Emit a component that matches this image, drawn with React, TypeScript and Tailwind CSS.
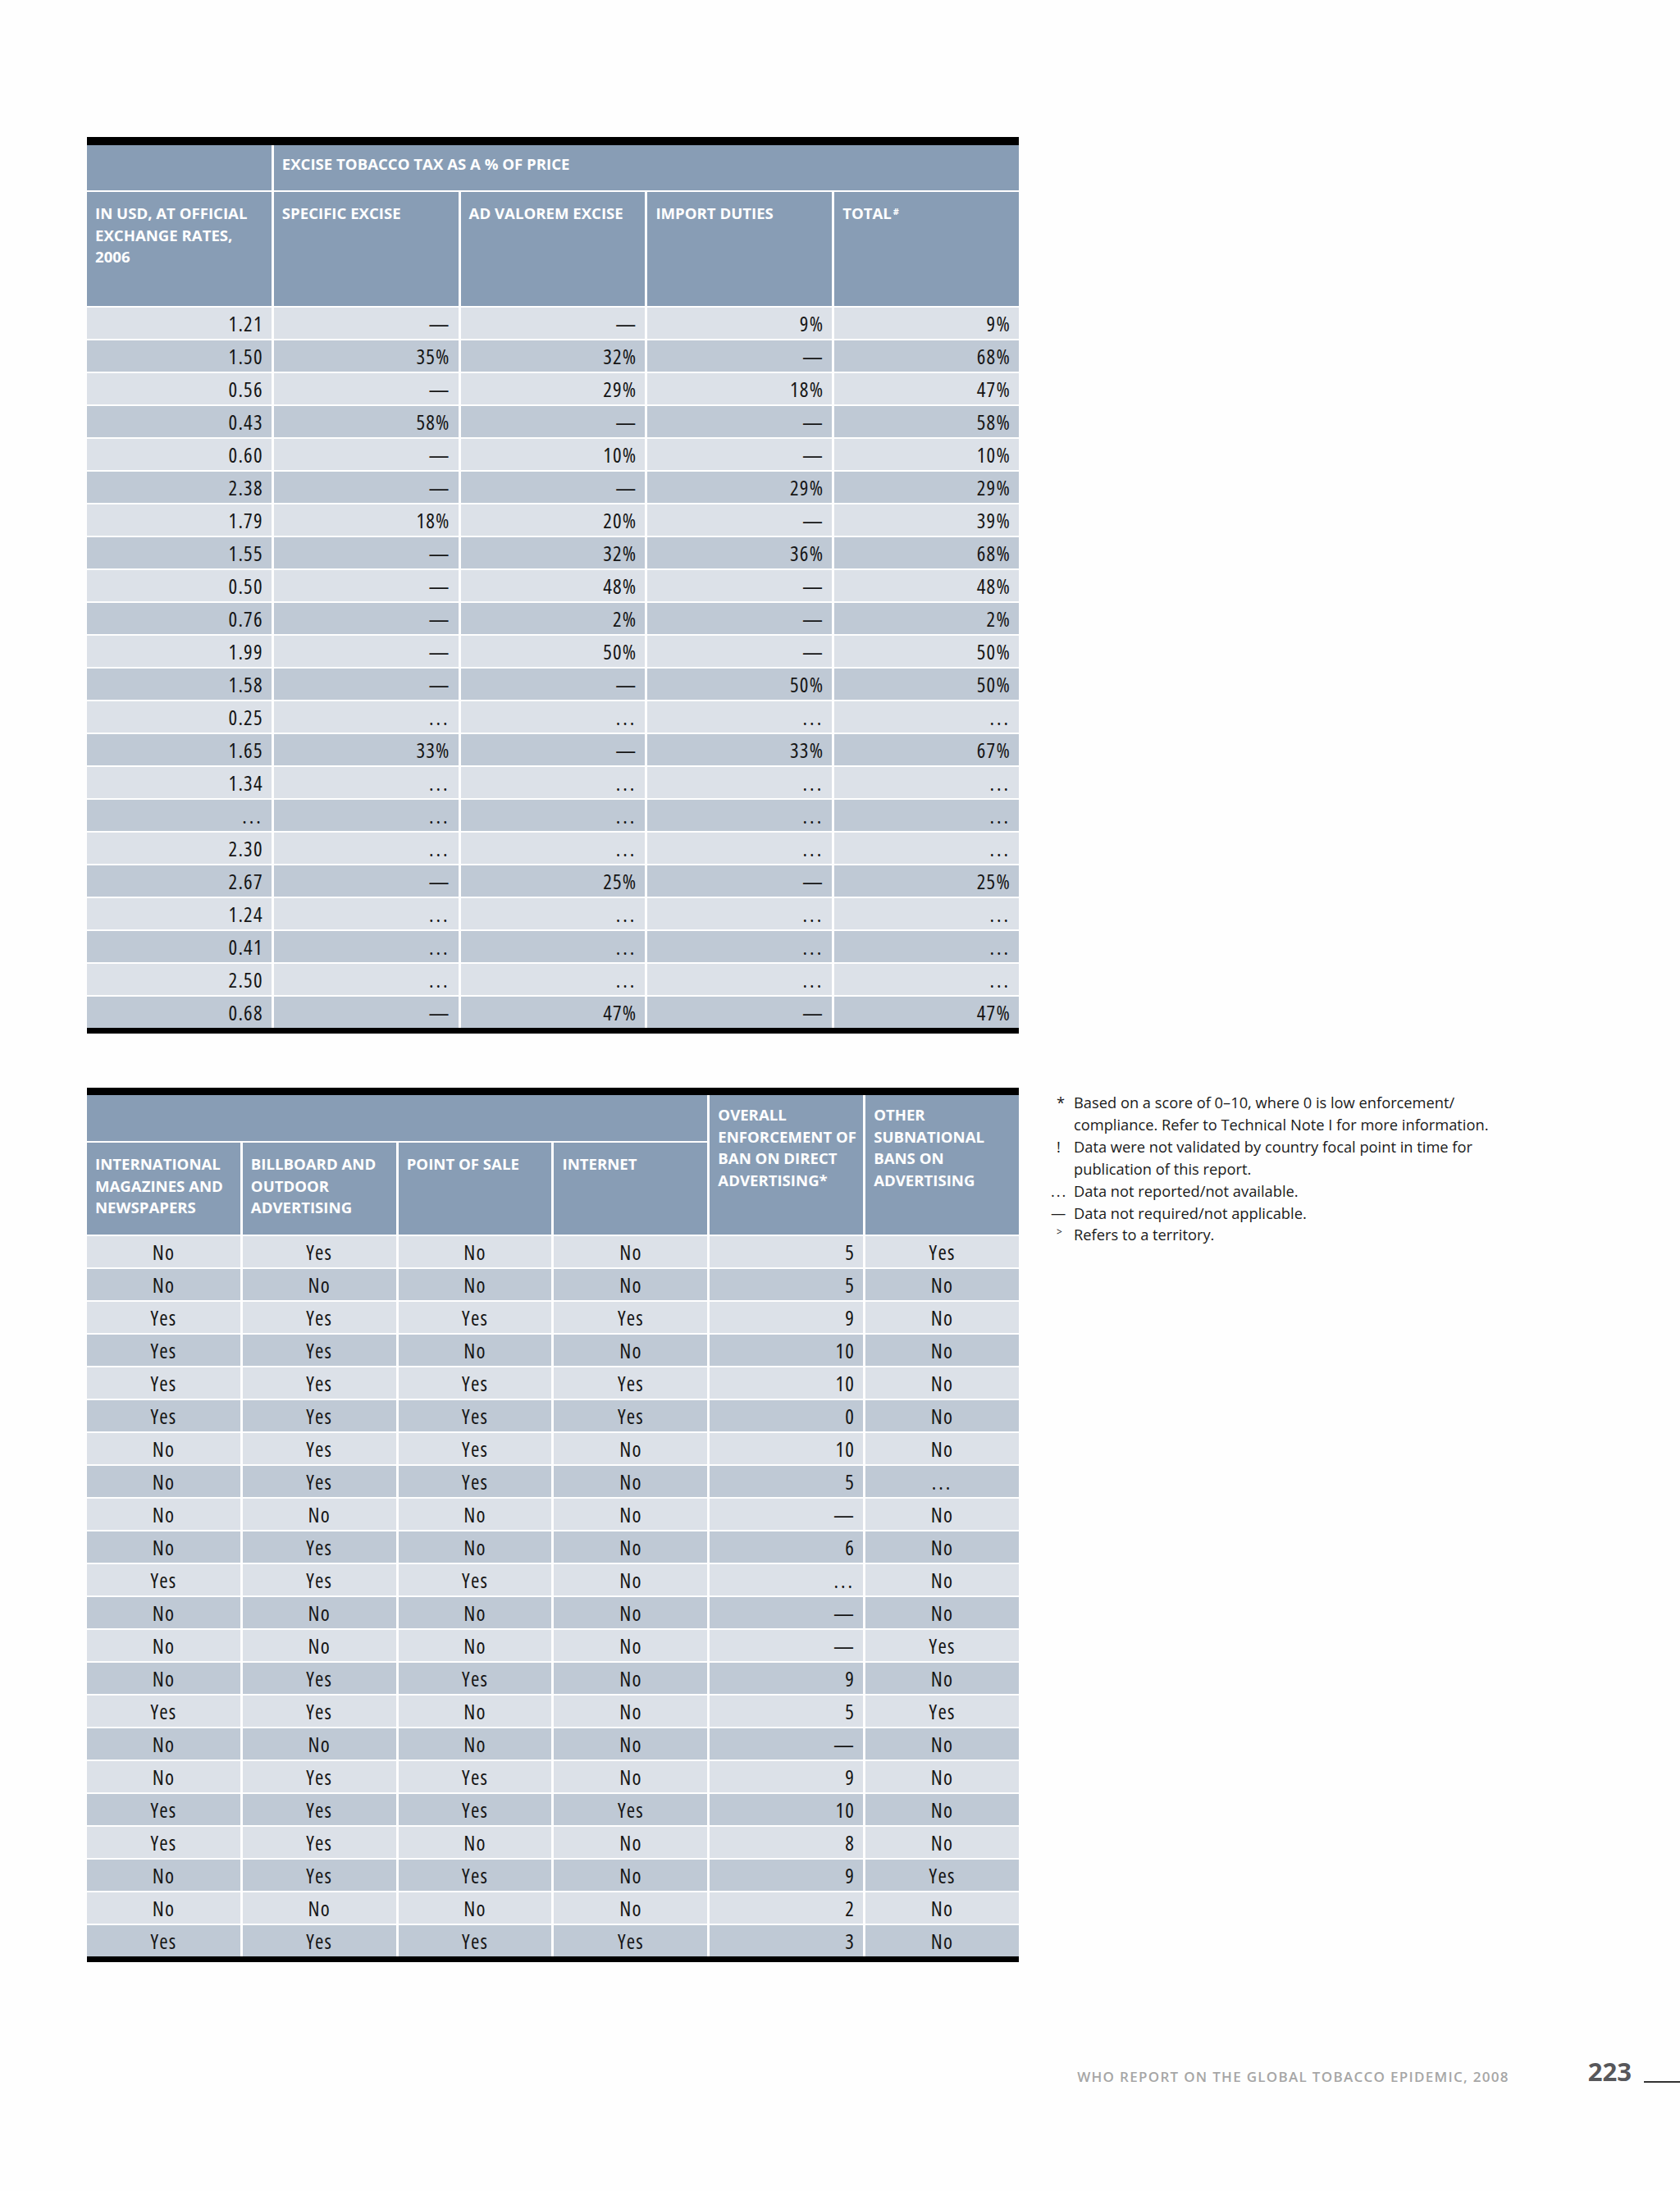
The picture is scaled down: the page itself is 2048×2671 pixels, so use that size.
import React from 'react';

const taxRows: string[][] = [
  ['1.21', '—', '—', '9%', '9%'],
  ['1.50', '35%', '32%', '—', '68%'],
  ['0.56', '—', '29%', '18%', '47%'],
  ['0.43', '58%', '—', '—', '58%'],
  ['0.60', '—', '10%', '—', '10%'],
  ['2.38', '—', '—', '29%', '29%'],
  ['1.79', '18%', '20%', '—', '39%'],
  ['1.55', '—', '32%', '36%', '68%'],
  ['0.50', '—', '48%', '—', '48%'],
  ['0.76', '—', '2%', '—', '2%'],
  ['1.99', '—', '50%', '—', '50%'],
  ['1.58', '—', '—', '50%', '50%'],
  ['0.25', '...', '...', '...', '...'],
  ['1.65', '33%', '—', '33%', '67%'],
  ['1.34', '...', '...', '...', '...'],
  ['...', '...', '...', '...', '...'],
  ['2.30', '...', '...', '...', '...'],
  ['2.67', '—', '25%', '—', '25%'],
  ['1.24', '...', '...', '...', '...'],
  ['0.41', '...', '...', '...', '...'],
  ['2.50', '...', '...', '...', '...'],
  ['0.68', '—', '47%', '—', '47%'],
];

const adRows: string[][] = [
  ['No', 'Yes', 'No', 'No', '5', 'Yes'],
  ['No', 'No', 'No', 'No', '5', 'No'],
  ['Yes', 'Yes', 'Yes', 'Yes', '9', 'No'],
  ['Yes', 'Yes', 'No', 'No', '10', 'No'],
  ['Yes', 'Yes', 'Yes', 'Yes', '10', 'No'],
  ['Yes', 'Yes', 'Yes', 'Yes', '0', 'No'],
  ['No', 'Yes', 'Yes', 'No', '10', 'No'],
  ['No', 'Yes', 'Yes', 'No', '5', '...'],
  ['No', 'No', 'No', 'No', '—', 'No'],
  ['No', 'Yes', 'No', 'No', '6', 'No'],
  ['Yes', 'Yes', 'Yes', 'No', '...', 'No'],
  ['No', 'No', 'No', 'No', '—', 'No'],
  ['No', 'No', 'No', 'No', '—', 'Yes'],
  ['No', 'Yes', 'Yes', 'No', '9', 'No'],
  ['Yes', 'Yes', 'No', 'No', '5', 'Yes'],
  ['No', 'No', 'No', 'No', '—', 'No'],
  ['No', 'Yes', 'Yes', 'No', '9', 'No'],
  ['Yes', 'Yes', 'Yes', 'Yes', '10', 'No'],
  ['Yes', 'Yes', 'No', 'No', '8', 'No'],
  ['No', 'Yes', 'Yes', 'No', '9', 'Yes'],
  ['No', 'No', 'No', 'No', '2', 'No'],
  ['Yes', 'Yes', 'Yes', 'Yes', '3', 'No'],
];

function HeadCell({ children, className = '' }: { children?: React.ReactNode; className?: string }) {
  return (
    <div
      className={`bg-[#889db5] pl-[10px] pr-[2px] text-[18.6px] font-bold uppercase leading-[26.7px] text-white ${className}`}
    >
      {children}
    </div>
  );
}

function DataCell({ value, dark, align }: { value: string; dark: boolean; align: 'right' | 'center' }) {
  const dots = value === '...';
  return (
    <div
      className={`h-[38px] px-[10px] text-[25px] font-normal leading-[38px] text-[#151515] font-stretch-condensed ${
        dark ? 'bg-[#bfc9d5]' : 'bg-[#dce1e8]'
      } ${align === 'right' ? 'text-right' : 'text-center'} ${dots ? 'tracking-[3px]' : 'tracking-[1.2px]'}`}
    >
      {value}
    </div>
  );
}

function TaxTable() {
  return (
    <div className="w-[1136px]">
      <div className="h-[10px] bg-black" />
      <div className="grid grid-cols-5 gap-x-[3px] gap-y-[2px]">
        <HeadCell className="h-[55px]" />
        <HeadCell className="col-span-4 h-[55px] pt-[10px]">Excise tobacco tax as a % of price</HeadCell>
        <HeadCell className="h-[139px] pt-[13px]">In USD, at official exchange rates, 2006</HeadCell>
        <HeadCell className="h-[139px] pt-[13px]">Specific excise</HeadCell>
        <HeadCell className="h-[139px] pt-[13px]">Ad valorem excise</HeadCell>
        <HeadCell className="h-[139px] pt-[13px]">Import duties</HeadCell>
        <HeadCell className="h-[139px] pt-[13px]">
          Total<sup className="ml-[2px] text-[11px]">#</sup>
        </HeadCell>
        {taxRows.map((row, i) =>
          row.map((v, j) => <DataCell key={`${i}-${j}`} value={v} dark={i % 2 === 1} align="right" />)
        )}
      </div>
      <div className="h-[7px] bg-black" />
    </div>
  );
}

function AdTable() {
  return (
    <div className="w-[1136px] shrink-0">
      <div className="h-[9px] bg-black" />
      <div className="grid grid-cols-6 gap-x-[3px] gap-y-[2px]">
        <HeadCell className="col-span-4 h-[56px]" />
        <HeadCell className="row-span-2 pt-[11px]">Overall enforcement of ban on direct advertising*</HeadCell>
        <HeadCell className="row-span-2 pt-[11px]">Other subnational bans on advertising</HeadCell>
        <HeadCell className="h-[112px] pt-[13px]">International magazines and newspapers</HeadCell>
        <HeadCell className="h-[112px] pt-[13px]">Billboard and outdoor advertising</HeadCell>
        <HeadCell className="h-[112px] pt-[13px]">Point of sale</HeadCell>
        <HeadCell className="h-[112px] pt-[13px]">Internet</HeadCell>
        {adRows.map((row, i) =>
          row.map((v, j) => (
            <DataCell key={`${i}-${j}`} value={v} dark={i % 2 === 1} align={j === 4 ? 'right' : 'center'} />
          ))
        )}
      </div>
      <div className="h-[7px] bg-black" />
    </div>
  );
}

function Notes() {
  return (
    <div className="ml-[39px] mt-[5px] w-[600px] text-[18.3px] leading-[26.9px] text-[#1a1a1a]">
      <div className="flex">
        <span className="w-[28px] shrink-0 pl-[7px]">*</span>
        <span>
          Based on a score of 0–10, where 0 is low enforcement/
          <br />
          compliance. Refer to Technical Note I for more information.
        </span>
      </div>
      <div className="flex">
        <span className="w-[28px] shrink-0 pl-[7px]">!</span>
        <span>
          Data were not validated by country focal point in time for
          <br />
          publication of this report.
        </span>
      </div>
      <div className="flex">
        <span className="w-[28px] shrink-0 tracking-[2px]">...</span>
        <span>Data not reported/not available.</span>
      </div>
      <div className="flex">
        <span className="w-[28px] shrink-0">—</span>
        <span>Data not required/not applicable.</span>
      </div>
      <div className="flex">
        <span className="w-[28px] shrink-0 pl-[7px] text-[12px] leading-[20px]">&gt;</span>
        <span>Refers to a territory.</span>
      </div>
    </div>
  );
}

export default function App() {
  return (
    <div className="relative h-[2671px] w-[2048px] overflow-hidden bg-[#fefefe] font-['Open_Sans','Liberation_Sans',sans-serif]">
      <div className="pl-[106px] pt-[167px]">
        <TaxTable />
        <div className="mt-[66px] flex">
          <AdTable />
          <Notes />
        </div>
      </div>
      <div className="mt-[110px] flex items-center justify-end">
        <span className="text-[17px] font-semibold tracking-[1.3px] text-[#a6a6a6]">
          WHO REPORT ON THE GLOBAL TOBACCO EPIDEMIC, 2008
        </span>
        <span className="mb-[12px] ml-[96px] text-[31px] font-bold text-[#57575a]">223</span>
        <span className="ml-[15px] mt-[14px] h-[2px] w-[44px] bg-[#333]" />
      </div>
    </div>
  );
}
